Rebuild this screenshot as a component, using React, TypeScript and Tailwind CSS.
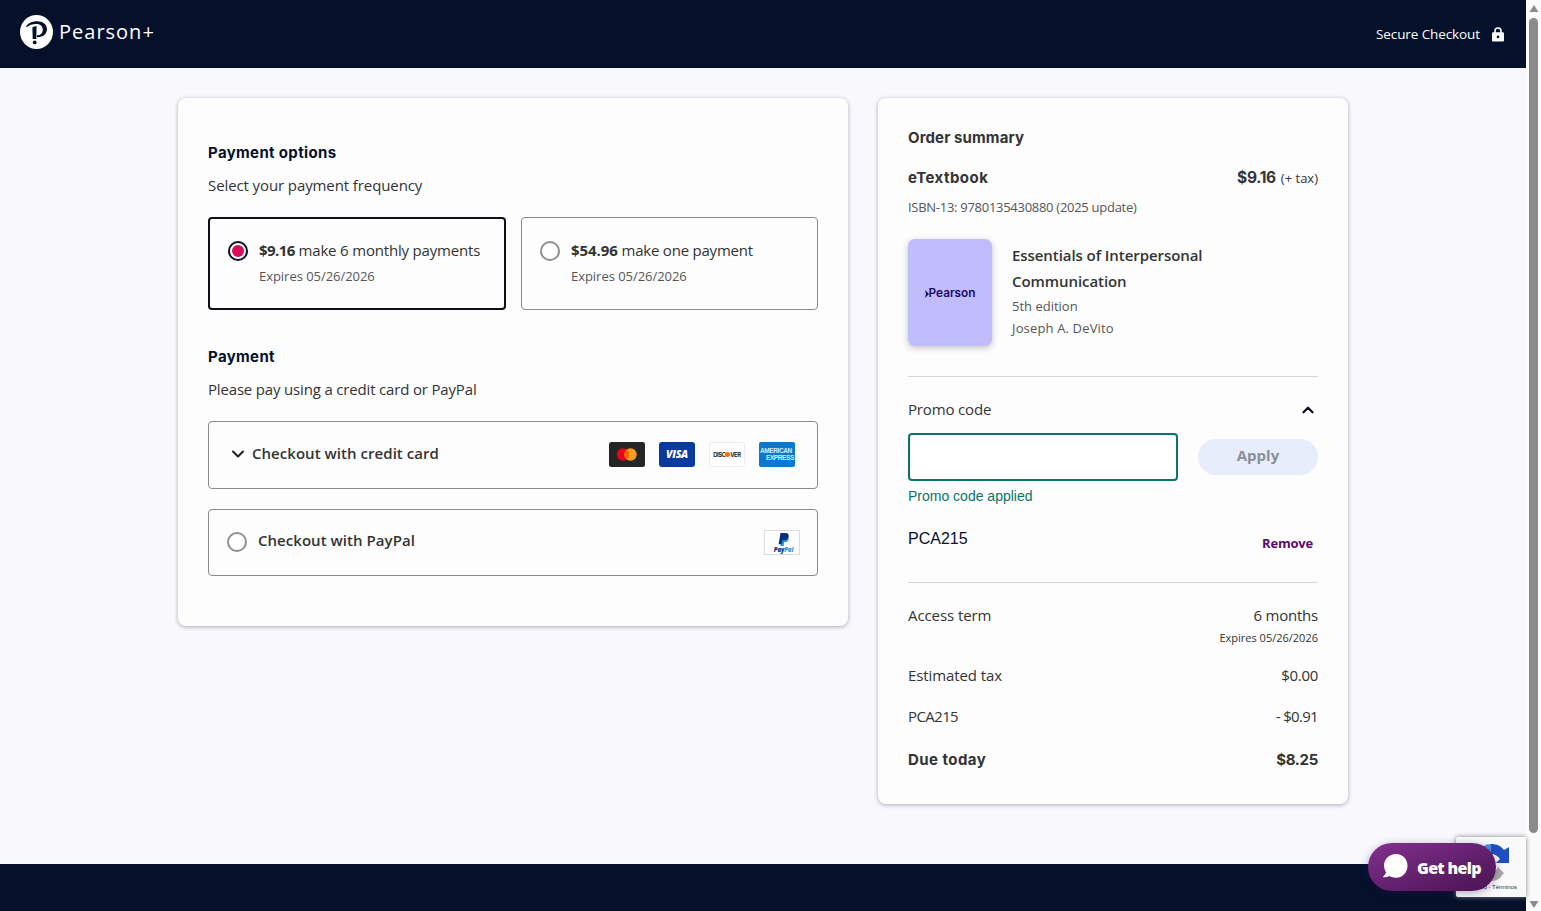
import { ChevronDown, ChevronUp } from "lucide-react";

const heading = "font-['Inter',sans-serif] font-bold text-[15px] leading-6";

const PearsonLogo = () => (
  <div className="flex items-center">
    <svg width="33" height="34" viewBox="0 0 33 34" className="shrink-0">
      <ellipse cx="16.500" cy="17" rx="16.500" ry="17" fill="#fff" />
      <path
        d="M6 11.700C7.600 8.500 12 6.300 17 6.300c6 0 10 3.200 10 7.800 0 5.100-4.300 8.500-10 8.200v-2c3.600-.1 5.800-2.300 5.800-5.900 0-3.500-2.700-5.500-6.900-5.500-3.600 0-6.500.9-8.900 3.200z"
        fill="#05112b"
      />
      <path d="M12.400 12.300c1.300-.8 2.700-1.200 4.200-1.300l-.3 13h-3.600z" fill="#05112b" />
      <circle cx="14.700" cy="27.400" r="1.900" fill="#05112b" />
    </svg>
    <span className="ml-[6px] text-[20px] leading-6 tracking-[1px]">Pearson+</span>
  </div>
);

const Header = () => (
  <header className="flex h-[68px] shrink-0 items-start justify-between bg-[#05112b] pl-5 pr-[22px] text-white">
    <div className="mt-[15px]">
      <PearsonLogo />
    </div>
    <div className="mt-[24px] flex items-center">
      <span className="text-[13.5px] leading-5 tracking-[-0.1px]">Secure Checkout</span>
      <svg width="12" height="15" viewBox="0 0 12 15" className="ml-3">
        <path d="M3 6V4a3 3 0 0 1 6 0v2" fill="none" stroke="#fff" strokeWidth="1.600" />
        <rect x="0" y="5.300" width="12" height="9.200" rx="1.200" fill="#fff" />
        <circle cx="6" cy="9.900" r="1.300" fill="#05112b" />
      </svg>
    </div>
  </header>
);

const Radio = ({ checked = false }: { checked?: boolean }) => (
  <span
    className={
      checked
        ? "flex size-5 shrink-0 items-center justify-center rounded-full border-2 border-[#0b0f1e] bg-white"
        : "flex size-5 shrink-0 items-center justify-center rounded-full border-2 border-[#8f8f8f] bg-white"
    }
  >
    {checked && <span className="size-3 rounded-full bg-[#db0a5b]" />}
  </span>
);

const Mastercard = () => (
  <svg width="36" height="25" viewBox="0 0 36 25">
    <rect width="36" height="25" rx="2.500" fill="#252525" />
    <circle cx="14" cy="12.500" r="6.200" fill="#eb001b" />
    <circle cx="21.500" cy="12.500" r="6.200" fill="#f79e1b" />
    <path d="M17.750 7.600a6.200 6.200 0 0 1 0 9.800a6.200 6.200 0 0 1 0-9.800z" fill="#ff5f00" />
  </svg>
);

const Visa = () => (
  <div className="flex h-[25px] w-9 items-center justify-center rounded-[3px] bg-[#0a3aa0] text-[10.500px] font-extrabold italic leading-none tracking-[-0.3px] text-white">
    VISA
  </div>
);

const Discover = () => (
  <div className="flex h-[25px] w-9 items-center justify-center rounded-[3px] border border-[#ececf0] bg-white pt-px font-['Inter',sans-serif] text-[5.800px] font-bold leading-none tracking-[-0.35px] text-[#222]">
    DISC<span className="mx-[-0.3px] size-[5px] rounded-full bg-[#f47216]" />VER
  </div>
);

const Amex = () => (
  <div className="flex h-[25px] w-9 flex-col justify-center overflow-hidden rounded-[2px] bg-[#0a78cf] font-['Liberation_Sans',sans-serif] text-[6.500px] font-bold leading-[7px] tracking-[-0.4px] text-[#d8ecfb]">
    <span className="whitespace-nowrap pl-px">AMERICAN</span>
    <span className="whitespace-nowrap pl-[7px]">EXPRESS</span>
  </div>
);

const PayPal = () => (
  <div className="flex h-[25px] w-9 flex-col items-center border border-[#d9dce3] bg-white pl-[3px] pt-[2px]">
    <svg width="12" height="13" viewBox="0 0 12 13">
      <path d="M3.500 3h5.500c2 .8 2 3 1.200 4.400-.8 1.300-2 1.700-3.900 1.700L5.600 13H2.500z" fill="#1f9ad6" />
      <path d="M2.500 0h5c2.600 0 3.600 1.700 3.100 3.800C10 6.200 8.500 7.300 6 7.300H4.400L3.600 11.200H.6z" fill="#0b2f7c" />
    </svg>
    <span className="text-[6.200px] font-extrabold italic leading-[7px] tracking-[-0.2px] text-[#0b2f7c]">
      Pay<span className="text-[#1f9ad6]">Pal</span>
    </span>
  </div>
);

const PaymentCard = () => (
  <section className="h-[528px] w-[670px] rounded-lg bg-[#fdfdfe] px-[30px] pt-[43px] shadow-[0_1px_4px_rgba(30,30,60,0.35)]">
    <h2 className={`${heading} tracking-[0.35px] text-[#05112b]`}>Payment options</h2>
    <p className="mt-2 text-[15px] leading-6 tracking-[-0.1px]">Select your payment frequency</p>

    <div className="mt-5 flex gap-[15px]">
      <label className="flex h-[93px] w-[298px] rounded-[4px] border-2 border-[#0b0f1e] pl-[18px] pt-[22px]">
        <Radio checked />
        <div className="ml-[11px] mt-[-4px]">
          <div className="text-[15px] leading-[26px] tracking-[-0.18px]">
            <b className="tracking-[-0.55px]">$9.16</b> make 6 monthly payments
          </div>
          <div className="text-[13px] leading-[26px] tracking-[-0.04px] text-[#555]">Expires 05/26/2026</div>
        </div>
      </label>
      <label className="flex h-[93px] w-[297px] rounded-[4px] border border-[#8a8a8a] pl-[18px] pt-[23px]">
        <Radio />
        <div className="ml-[11px] mt-[-4px]">
          <div className="text-[15px] leading-[26px] tracking-[-0.22px]">
            <b className="tracking-[-0.05px]">$54.96</b> make one payment
          </div>
          <div className="text-[13px] leading-[26px] tracking-[-0.04px] text-[#555]">Expires 05/26/2026</div>
        </div>
      </label>
    </div>

    <h2 className={`${heading} mt-[35px] tracking-[0.35px] text-[#05112b]`}>Payment</h2>
    <p className="mt-2 text-[15px] leading-6 tracking-[-0.17px]">Please pay using a credit card or PayPal</p>

    <div className="mt-5 flex h-[68px] items-center rounded-[4px] border border-[#8a8a8a] pl-[19px] pr-[22px]">
      <ChevronDown size={20} strokeWidth={2.5} className="mt-[-3px] text-[#222]" />
      <span className="ml-1 mt-[-5px] text-[15px] font-semibold leading-6 tracking-[0.04px]">Checkout with credit card</span>
      <div className="ml-auto mt-[-2px] flex gap-[14px]">
        <Mastercard />
        <Visa />
        <Discover />
        <Amex />
      </div>
    </div>

    <div className="mt-5 flex h-[67px] items-center rounded-[4px] border border-[#8a8a8a] pl-[18px] pr-[17px]">
      <div className="mt-[-2px]">
        <Radio />
      </div>
      <span className="ml-[11px] mt-[-6px] text-[15px] font-semibold leading-6 tracking-[0.04px]">Checkout with PayPal</span>
      <div className="ml-auto">
        <PayPal />
      </div>
    </div>
  </section>
);

const BookCover = () => (
  <div className="flex h-[107px] w-[84px] shrink-0 items-center justify-center rounded-[7px] bg-[#c1bdfd] pt-[2px] shadow-[0_2px_6px_rgba(60,60,60,0.3)]">
    <svg width="4" height="8" viewBox="0 0 4 8">
      <path d="M0 0l4 4-4 4 1-4z" fill="#1b0a63" />
    </svg>
    <span className="font-['Inter',sans-serif] text-[11.800px] font-semibold leading-none text-[#1b0a63]">Pearson</span>
  </div>
);

const OrderSummary = () => (
  <section className="h-[706px] w-[470px] rounded-lg bg-[#fdfdfe] px-[30px] pt-[28px] shadow-[0_1px_4px_rgba(30,30,60,0.35)]">
    <h2 className={`${heading} tracking-[0.12px]`}>Order summary</h2>
    <div className="mt-4 flex h-6 justify-between">
      <h3 className={`${heading} tracking-[0.45px]`}>eTextbook</h3>
      <div className="mt-[-1px] leading-6">
        <b className="font-['Inter',sans-serif] text-[15.500px] tracking-[-0.3px]">$9.16</b>
        <span className="ml-[5px] text-[13px]">(+ tax)</span>
      </div>
    </div>
    <p className="mt-[7px] text-[13px] leading-5 tracking-[-0.28px] text-[#555]">ISBN-13: 9780135430880 (2025 update)</p>

    <div className="mt-[22px] flex gap-5">
      <BookCover />
      <div className="w-[210px] pt-[3px]">
        <p className="text-[15px] font-semibold leading-[26px] tracking-[-0.07px]">Essentials of Interpersonal Communication</p>
        <p className="mt-px text-[13px] leading-[22px] text-[#555]">5th edition</p>
        <p className="text-[13px] leading-[22px] tracking-[0.15px] text-[#555]">Joseph A. DeVito</p>
      </div>
    </div>

    <div className="mt-[30px] flex items-center justify-between border-t border-[#d6d6da] pt-5">
      <span className="text-[15px] leading-6 tracking-[-0.15px]">Promo code</span>
      <ChevronUp size={18} strokeWidth={3} className="mr-[1px] mt-[2px] text-[#0b0f1e]" />
    </div>
    <div className="mt-3 flex items-center justify-between">
      <div className="h-12 w-[270px] rounded-[4px] border-2 border-[#0a7468] bg-white" />
      <button className="h-9 w-[120px] rounded-full bg-[#e7edfa] pb-[4px] text-[15px] font-bold leading-6 text-[#8b8f9c]">
        Apply
      </button>
    </div>
    <p className="mt-[5px] font-['Liberation_Sans',sans-serif] text-[14px] leading-5 text-[#0a7468]">Promo code applied</p>
    <div className="mt-[21px] flex h-6 items-center justify-between pr-[5px]">
      <span className="font-['Liberation_Sans',sans-serif] text-[16px] leading-6 text-[#05112b]">PCA215</span>
      <button className="mt-[7px] text-[13px] font-bold leading-5 tracking-[-0.2px] text-[#5d0a6b]">Remove</button>
    </div>

    <div className="mt-[31px] border-t border-[#d6d6da] pt-5 text-[15px] leading-6">
      <div className="flex justify-between">
        <span className="tracking-[-0.08px]">Access term</span>
        <span className="tracking-[-0.22px]">6 months</span>
      </div>
      <p className="mt-[3px] text-right text-[11px] leading-4">Expires 05/26/2026</p>
      <div className="mt-[17px] flex justify-between">
        <span className="tracking-[-0.1px]">Estimated tax</span>
        <span className="tracking-[-0.3px]">$0.00</span>
      </div>
      <div className="mt-[17px] flex justify-between">
        <span className="tracking-[-0.6px]">PCA215</span>
        <span className="tracking-[-0.7px]">- $0.91</span>
      </div>
    </div>
    <div className="mt-5 flex justify-between">
      <span className={`${heading} tracking-[0.45px]`}>Due today</span>
      <span className={`${heading} tracking-[-0.3px]`}>$8.25</span>
    </div>
  </section>
);

const Recaptcha = () => (
  <div className="absolute bottom-[14px] right-[15px] h-[60px] w-[70px] overflow-hidden rounded-l-[2px] bg-[#f9f9f9] shadow-[0_0_5px_#808080]">
    <svg width="34" height="40" viewBox="0 0 34 40" className="absolute left-[20px] top-[5px]">
      <path d="M15 2v9a7 7 0 0 0-7 6L2 11C5 5 9 2 15 2z" fill="#4a90e2" />
      <path d="M15 2c6 0 10 2 13 6l5-3v16H20l4-4c-2-3-5-5-9-5z" fill="#1f4fc4" />
      <path d="M22 25l6 6-4 5c-5 4-12 4-17 0l4-5c4 2 8 0 11-6z" fill="#ababab" />
    </svg>
    <span className="absolute right-[9px] top-[46px] whitespace-nowrap font-['Liberation_Sans',sans-serif] text-[6px] leading-[8px] text-[#333]">
      Privacidad - Términos
    </span>
  </div>
);

const GetHelp = () => (
  <button className="absolute bottom-5 right-[45px] flex h-12 w-32 items-center rounded-full bg-linear-to-br from-[#83308f] to-[#4a1452] pl-[14px] text-white shadow-[0_2px_8px_rgba(60,10,80,0.35)]">
    <svg width="26" height="25" viewBox="0 0 26 25" className="mt-[-2px]">
      <path d="M14 0C7.400 0 2 5 2 11.500c0 2.700.9 5 2.300 7L.8 23.200c2.400.3 4.700-.1 6.500-1.100 2 1.100 4.300 1.700 6.700 1.700 6.600 0 11.500-5.300 11.500-12.100C25.500 5 20.600 0 14 0z" fill="#fff" />
    </svg>
    <span className="ml-[9px] mt-[2px] whitespace-nowrap text-[16px] font-extrabold leading-6 tracking-[-0.7px]">Get help</span>
  </button>
);

const Scrollbar = () => (
  <div className="flex w-[15px] shrink-0 flex-col items-center bg-[#fbfbfb] pb-[3px] pt-[5px]">
    <svg width="10" height="7" viewBox="0 0 10 7">
      <path d="M5 0l4.500 7H.5z" fill="#8b8b8b" />
    </svg>
    <div className="mt-[6px] h-[815px] w-[9px] rounded-full bg-[#8b8b8b]" />
    <svg width="10" height="7" viewBox="0 0 10 7" className="mt-auto">
      <path d="M5 7l4.500-7H.5z" fill="#8b8b8b" />
    </svg>
  </div>
);

const App = () => {
  return (
    <div className="relative flex h-[911px] w-[1541px] overflow-hidden font-['Open_Sans',sans-serif] text-[#333]">
      <div className="flex flex-1 flex-col bg-[#f8f8fd]">
        <Header />
        <main className="flex flex-1 items-start justify-center gap-[30px] pt-[30px]">
          <PaymentCard />
          <OrderSummary />
        </main>
        <footer className="h-[47px] shrink-0 bg-[#05112b]" />
      </div>
      <Scrollbar />
      <Recaptcha />
      <GetHelp />
    </div>
  );
};

export default App;
